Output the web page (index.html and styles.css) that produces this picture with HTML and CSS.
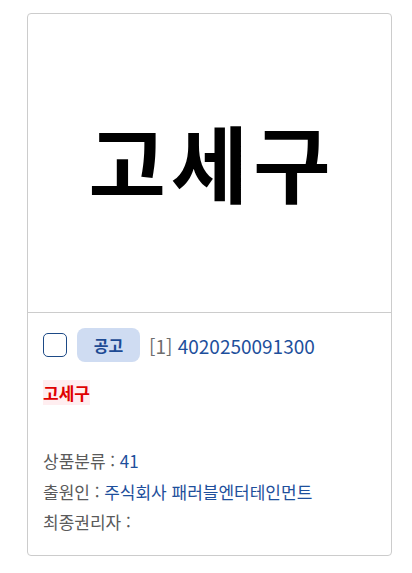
FILE: index.html
```html
<!DOCTYPE html>
<html lang="ko">
<head>
<meta charset="utf-8">
<link rel="stylesheet" href="styles.css">
</head>
<body>
<div class="page">
  <div class="card">
    <div class="thumb">
      <span class="thumb-text">고세구</span>
    </div>
    <div class="body">
      <div class="row">
        <span class="check"></span>
        <span class="badge">공고</span>
        <span class="num"><span class="idx">[1]</span> 4020250091300</span>
      </div>
      <div class="title"><span class="hl">고세구</span></div>
      <div class="info">
        <div class="line">상품분류 : <span class="val">41</span></div>
        <div class="line">출원인 : <span class="val">주식회사 패러블엔터테인먼트</span></div>
        <div class="line">최종권리자 : </div>
      </div>
    </div>
  </div>
</div>
</body>
</html>
```
FILE: styles.css
```css
html, body {
  margin: 0;
  padding: 0;
  background: #fff;
}
body {
  font-family: "Noto Sans CJK KR", "Noto Sans", sans-serif;
}
.page {
  padding: 13px 0 0 27px;
}
.card {
  width: 363px;
  height: 541px;
  border: 1px solid #cccccc;
  border-radius: 4px;
  display: flex;
  flex-direction: column;
}
.thumb {
  height: 298px;
  border-bottom: 1px solid #cccccc;
  display: flex;
  align-items: center;
  justify-content: center;
}
.thumb-text {
  font-size: 84px;
  font-weight: 700;
  color: #000;
  line-height: 1;
  letter-spacing: 5px;
  padding-left: 5px;
  margin-top: -4px;
}
.body {
  padding: 15px 15px 0 15px;
}
.row {
  display: flex;
  align-items: center;
  height: 34px;
}
.check {
  width: 22px;
  height: 22px;
  border: 1.5px solid #1d4a86;
  border-radius: 5px;
  box-sizing: content-box;
  margin-right: 10px;
}
.badge {
  width: 63px;
  height: 34px;
  background: #cfdcf2;
  border-radius: 8px;
  color: #1d4a94;
  font-size: 16px;
  font-weight: 700;
  display: flex;
  align-items: center;
  justify-content: center;
  margin-right: 9px;
}
.num {
  font-size: 19px;
  font-weight: 400;
  color: #1e4f9c;
  line-height: 1;
}
.idx {
  color: #6e6e6e;
}
.title {
  margin-top: 19px;
  font-size: 17px;
  font-weight: 700;
  line-height: 24px;
  color: #e00000;
}
.hl {
  background: #ffeef0;
}
.info {
  margin-top: 41px;
}
.line {
  font-size: 17px;
  font-weight: 400;
  line-height: 30.5px;
  color: #5a5a5a;
}
.val {
  color: #1e4f9c;
}
```
